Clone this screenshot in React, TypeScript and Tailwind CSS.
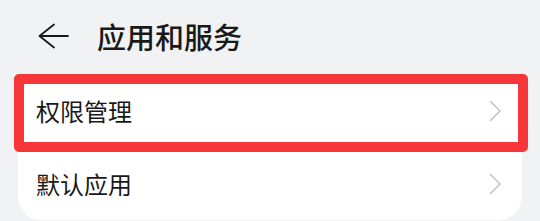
const font = { fontFamily: '"Noto Sans CJK SC", "Noto Sans", sans-serif' };

function Chevron() {
  return (
    <svg width="13" height="22" viewBox="0 0 13 22" fill="none" className="text-[#c4c4c4]">
      <path d="M1.5 1.5 L11 11 L1.5 20.5" stroke="currentColor" strokeWidth="1.6" strokeLinecap="round" strokeLinejoin="round" />
    </svg>
  );
}

function Row({ label }: { label: string }) {
  return (
    <div className="flex h-[73px] items-center justify-between pl-[18px] pr-[20px]">
      <span className="text-[24px] leading-none text-[#191919]">{label}</span>
      <Chevron />
    </div>
  );
}

export default function App() {
  return (
    <div className="h-[221px] w-[540px] overflow-hidden bg-[#f1f2f4]" style={font}>
      <div className="flex h-[74px] items-center pb-[2px] pl-[38px]">
        <svg width="31" height="26" viewBox="0 0 31 26" fill="none" className="text-[#191919]">
          <path d="M30 13 H2 M16 1.5 L1.5 13 L16 24.5" stroke="currentColor" strokeWidth="1.8" strokeLinecap="round" strokeLinejoin="round" />
        </svg>
        <span className="ml-[28px] text-[29px] font-medium leading-none text-[#191919]">应用和服务</span>
      </div>
      <div className="relative mx-[18px] h-[146px] rounded-[24px] bg-white">
        <Row label="权限管理" />
        <Row label="默认应用" />
        <div className="absolute left-[-4px] top-0 h-[78px] w-[514px] rounded-[5px] border-[10px] border-[#f73639]" />
      </div>
    </div>
  );
}
